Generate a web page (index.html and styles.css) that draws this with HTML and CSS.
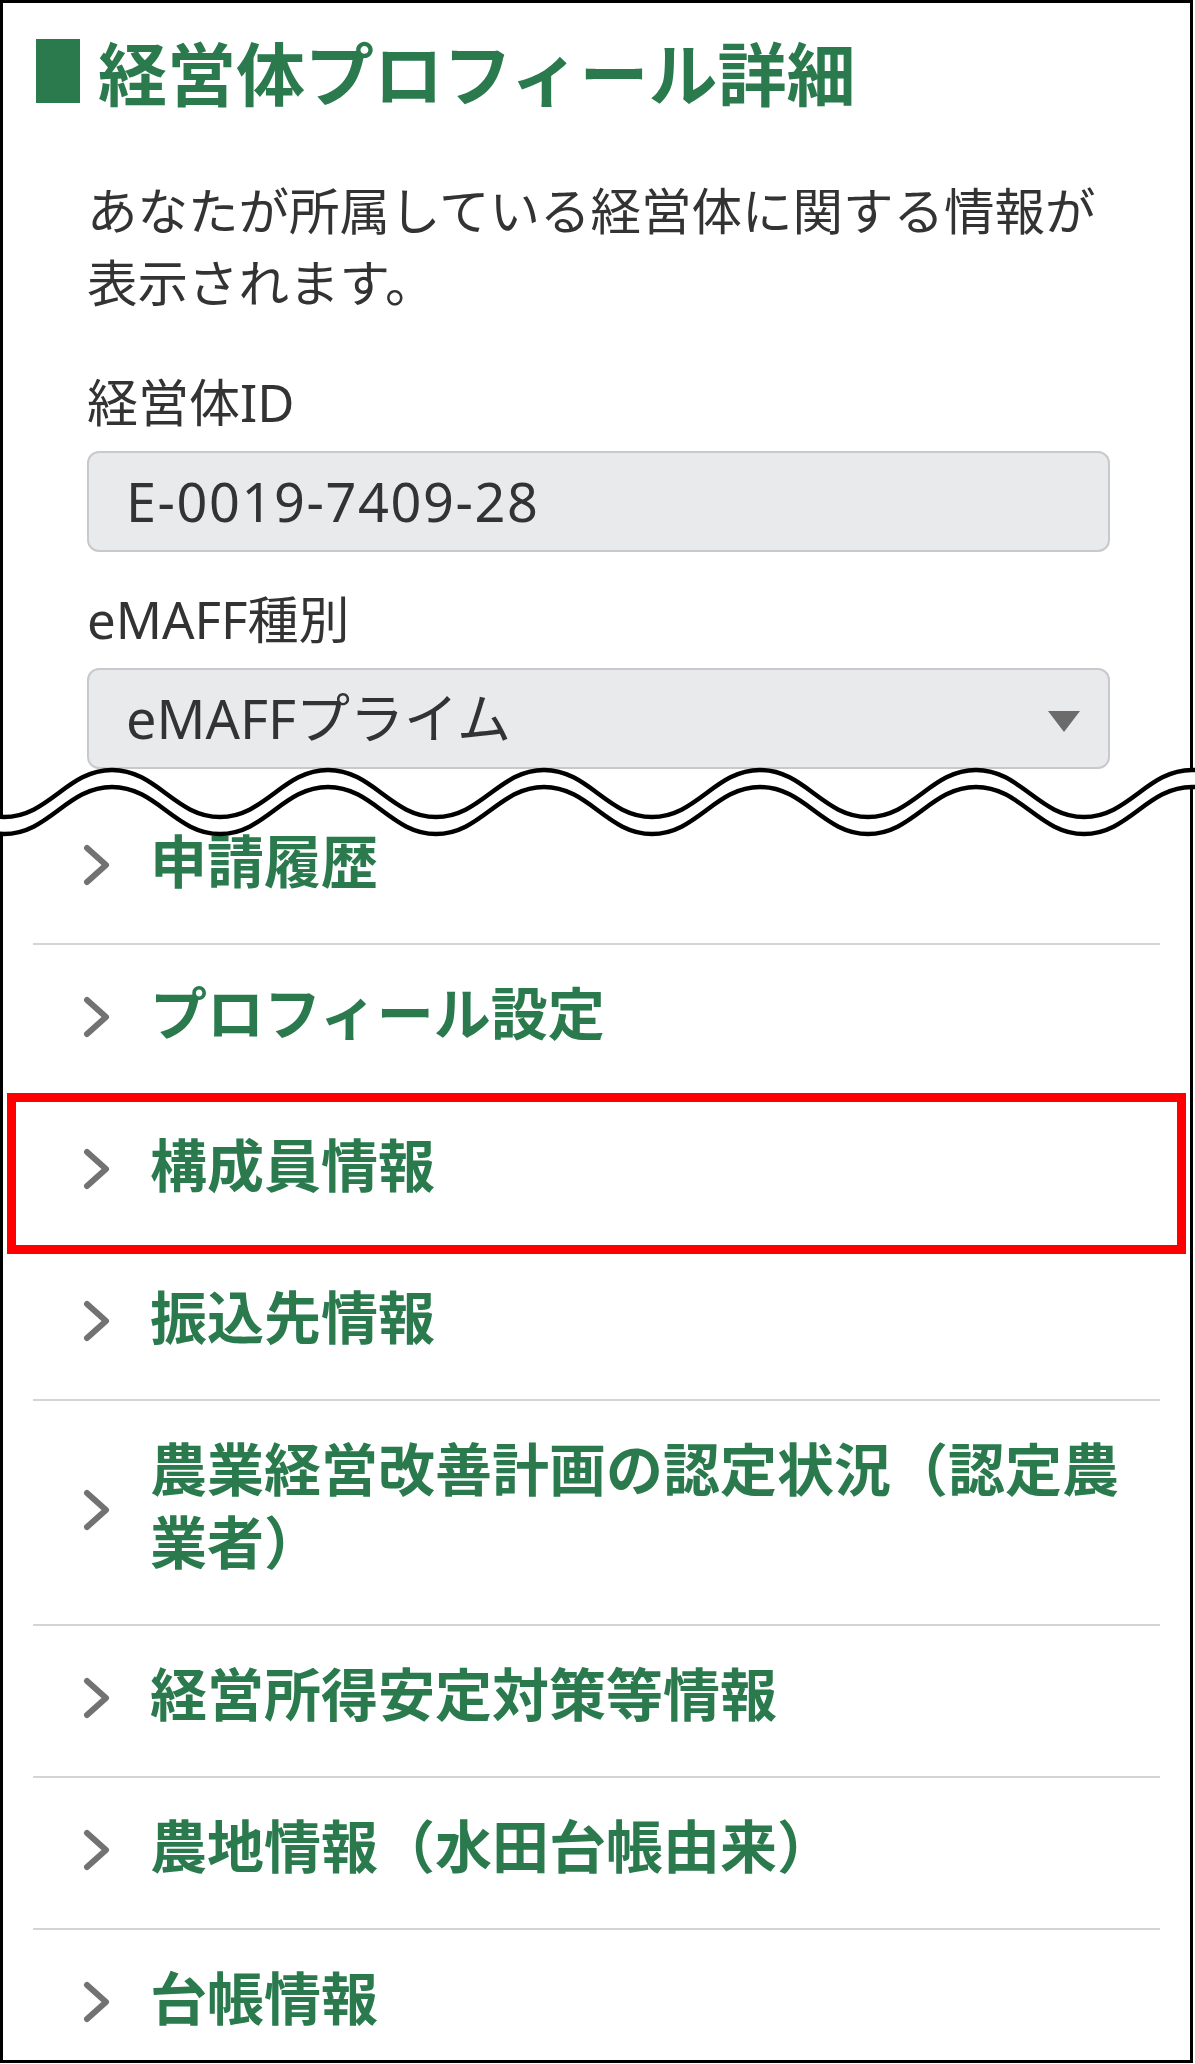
FILE: index.html
```html
<!DOCTYPE html>
<html lang="ja">
<head>
<meta charset="utf-8">
<title>経営体プロフィール詳細</title>
<link rel="stylesheet" href="styles.css">
</head>
<body>
<div class="page">
  <div class="frame">
    <section class="profile">
      <h1 class="title"><span class="title-bar"></span><span class="title-text">経営体プロフィール詳細</span></h1>
      <div class="profile-body">
        <p class="lead">あなたが所属している経営体に関する情報が表示されます。</p>
        <div class="field">
          <label class="field-label">経営体ID</label>
          <div class="field-box"><span class="field-id">E-0019-7409-28</span></div>
        </div>
        <div class="field field-select">
          <label class="field-label">eMAFF種別</label>
          <div class="field-box"><span>eMAFFプライム</span><svg class="caret" viewBox="0 0 32 21" width="32" height="21"><polygon points="0,0 32,0 16,21" fill="#6b6b6b"/></svg></div>
        </div>
      </div>
    </section>
    <ul class="menu">
      <li class="menu-item"><svg class="chev" viewBox="0 0 27 42" width="27" height="42"><polyline points="4,4 23,21 4,38" fill="none" stroke="#727272" stroke-width="6" stroke-linecap="round" stroke-linejoin="round"/></svg><span class="menu-text">申請履歴</span></li>
      <li class="menu-item"><svg class="chev" viewBox="0 0 27 42" width="27" height="42"><polyline points="4,4 23,21 4,38" fill="none" stroke="#727272" stroke-width="6" stroke-linecap="round" stroke-linejoin="round"/></svg><span class="menu-text">プロフィール設定</span></li>
      <li class="menu-item"><svg class="chev" viewBox="0 0 27 42" width="27" height="42"><polyline points="4,4 23,21 4,38" fill="none" stroke="#727272" stroke-width="6" stroke-linecap="round" stroke-linejoin="round"/></svg><span class="menu-text">構成員情報</span><span class="highlight"></span></li>
      <li class="menu-item"><svg class="chev" viewBox="0 0 27 42" width="27" height="42"><polyline points="4,4 23,21 4,38" fill="none" stroke="#727272" stroke-width="6" stroke-linecap="round" stroke-linejoin="round"/></svg><span class="menu-text">振込先情報</span></li>
      <li class="menu-item"><svg class="chev" viewBox="0 0 27 42" width="27" height="42"><polyline points="4,4 23,21 4,38" fill="none" stroke="#727272" stroke-width="6" stroke-linecap="round" stroke-linejoin="round"/></svg><span class="menu-text">農業経営改善計画の認定状況（認定農業者）</span></li>
      <li class="menu-item"><svg class="chev" viewBox="0 0 27 42" width="27" height="42"><polyline points="4,4 23,21 4,38" fill="none" stroke="#727272" stroke-width="6" stroke-linecap="round" stroke-linejoin="round"/></svg><span class="menu-text">経営所得安定対策等情報</span></li>
      <li class="menu-item"><svg class="chev" viewBox="0 0 27 42" width="27" height="42"><polyline points="4,4 23,21 4,38" fill="none" stroke="#727272" stroke-width="6" stroke-linecap="round" stroke-linejoin="round"/></svg><span class="menu-text">農地情報（水田台帳由来）</span></li>
      <li class="menu-item"><svg class="chev" viewBox="0 0 27 42" width="27" height="42"><polyline points="4,4 23,21 4,38" fill="none" stroke="#727272" stroke-width="6" stroke-linecap="round" stroke-linejoin="round"/></svg><span class="menu-text">台帳情報</span></li>
    </ul>
  </div>
  <svg class="break-wave" viewBox="0 740 1195 120" width="1195" height="120" preserveAspectRatio="none">
    <path fill="#fff" d="M -104 770 C -59 770 -41 817 4 817 C 49 817 67 770 112 770 C 157 770 175 817 220 817 C 265 817 283 770 328 770 C 373 770 391 817 436 817 C 481 817 499 770 544 770 C 589 770 607 817 652 817 C 697 817 715 770 760 770 C 805 770 823 817 868 817 C 913 817 931 770 976 770 C 1021 770 1039 817 1084 817 C 1129 817 1147 770 1192 770 C 1237 770 1255 817 1300 817 L 1300 834 C 1255 834 1237 787 1192 787 C 1147 787 1129 834 1084 834 C 1039 834 1021 787 976 787 C 931 787 913 834 868 834 C 823 834 805 787 760 787 C 715 787 697 834 652 834 C 607 834 589 787 544 787 C 499 787 481 834 436 834 C 391 834 373 787 328 787 C 283 787 265 834 220 834 C 175 834 157 787 112 787 C 67 787 49 834 4 834 C -41 834 -59 787 -104 787 Z"/>
    <path fill="none" stroke="#000" stroke-width="4.5" d="M -104 770 C -59 770 -41 817 4 817 C 49 817 67 770 112 770 C 157 770 175 817 220 817 C 265 817 283 770 328 770 C 373 770 391 817 436 817 C 481 817 499 770 544 770 C 589 770 607 817 652 817 C 697 817 715 770 760 770 C 805 770 823 817 868 817 C 913 817 931 770 976 770 C 1021 770 1039 817 1084 817 C 1129 817 1147 770 1192 770 C 1237 770 1255 817 1300 817"/>
    <path fill="none" stroke="#000" stroke-width="4.5" d="M -104 787 C -59 787 -41 834 4 834 C 49 834 67 787 112 787 C 157 787 175 834 220 834 C 265 834 283 787 328 787 C 373 787 391 834 436 834 C 481 834 499 787 544 787 C 589 787 607 834 652 834 C 697 834 715 787 760 787 C 805 787 823 834 868 834 C 913 834 931 787 976 787 C 1021 787 1039 834 1084 834 C 1129 834 1147 787 1192 787 C 1237 787 1255 834 1300 834"/>
  </svg>
</div>
</body>
</html>
```

FILE: styles.css
```css
html, body {
  margin: 0;
  padding: 0;
  background: #fff;
}

.page {
  position: relative;
  width: 1195px;
  height: 2064px;
}

.frame {
  width: 1193px;
  height: 2063px;
  box-sizing: border-box;
  border: 3px solid #000;
  overflow: hidden;
  background: #fff;
  font-family: "Noto Sans CJK JP", "Noto Sans", sans-serif;
  color: #333;
}

.title {
  display: flex;
  align-items: center;
  gap: 18px;
  margin: 0;
  padding: 36px 0 0 33px;
  font-size: 69px;
  line-height: 64px;
  font-weight: 700;
  color: #2a7a4e;
}

.title-bar {
  flex: none;
  width: 44px;
  height: 64px;
  background: #2a7a4e;
}

.profile-body {
  padding: 0 80px 0 84px;
}

.lead {
  margin: 69px 0 0;
  font-size: 50.5px;
  line-height: 72px;
  color: #333;
}

.field-label {
  display: block;
  margin-top: 50px;
  font-family: "Noto Sans", "Noto Sans CJK JP", sans-serif;
  font-size: 51px;
  line-height: 72px;
  color: #333;
}

.field-select .field-label {
  margin-top: 31px;
}

.field-box {
  display: flex;
  align-items: center;
  justify-content: space-between;
  margin-top: 13px;
  height: 101px;
  box-sizing: border-box;
  padding: 0 28px 0 37px;
  border: 2px solid #c8c9cc;
  border-radius: 12px;
  background: #e9eaec;
  font-family: "Noto Sans", "Noto Sans CJK JP", sans-serif;
  font-size: 54px;
  line-height: 97px;
  color: #333;
}

.field-id {
  letter-spacing: 1.6px;
}

.caret {
  flex: none;
  margin-top: 6px;
}

.menu {
  list-style: none;
  margin: 24px 30px 0;
  padding: 0;
}

.menu-item {
  position: relative;
  display: flex;
  gap: 40px;
  padding-left: 50px;
  border-bottom: 2px solid #d5d5d5;
}

.chev {
  flex: none;
  align-self: center;
  margin-bottom: 6px;
}

.menu-text {
  flex: 1;
  min-width: 0;
  padding: 29px 0 48px;
  font-size: 57px;
  line-height: 73px;
  font-weight: 700;
  color: #2a7a4e;
}

.highlight {
  position: absolute;
  top: -4px;
  bottom: -7px;
  left: -26px;
  right: -26px;
  border: 9px solid #ff0000;
  pointer-events: none;
}

.break-wave {
  position: absolute;
  left: 0;
  top: 740px;
  width: 1195px;
  height: 120px;
  pointer-events: none;
}
```
